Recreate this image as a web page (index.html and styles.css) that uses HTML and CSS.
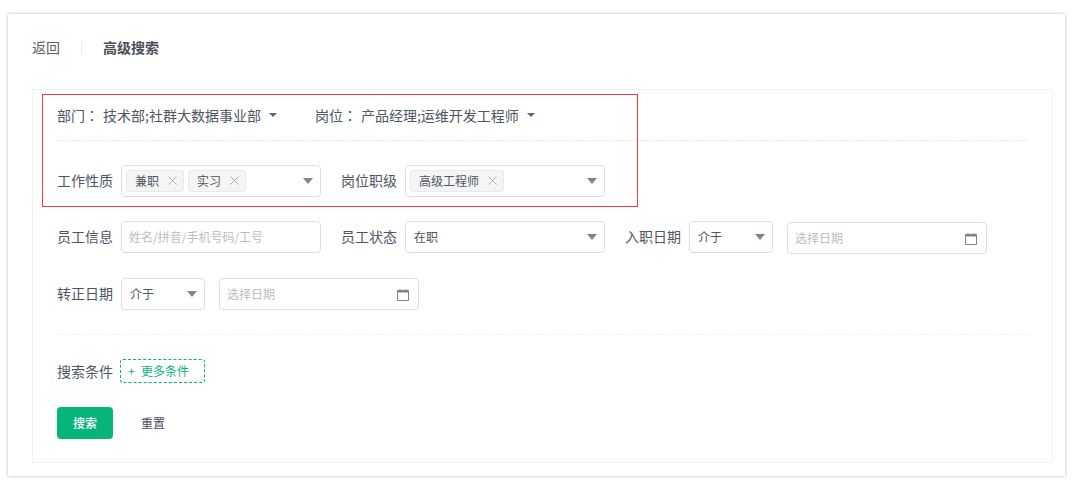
FILE: index.html
```html
<!DOCTYPE html>
<html lang="zh">
<head>
<meta charset="utf-8">
<title>高级搜索</title>
<link rel="stylesheet" href="styles.css">
</head>
<body>
<main class="card">
  <header class="head">
    <a class="back">返回</a>
    <span class="sep"></span>
    <h1 class="title">高级搜索</h1>
  </header>
  <section class="panel">
    <div class="highlight"></div>
    <div class="filters">
      <div class="filter"><span class="filter-label" lang="zh-TW">部门：</span><span class="filter-value">技术部;社群大数据事业部</span><i class="caret small"></i></div>
      <div class="filter"><span class="filter-label" lang="zh-TW">岗位：</span><span class="filter-value">产品经理;运维开发工程师</span><i class="caret small"></i></div>
    </div>
    <div class="rows">
      <div class="row">
        <div class="field">
          <label class="label">工作性质</label>
          <div class="control wide">
            <span class="tag">兼职<svg class="x" viewBox="0 0 9 9"><path d="M.5.5l8 8M8.500.5l-8 8"/></svg></span>
            <span class="tag">实习<svg class="x" viewBox="0 0 9 9"><path d="M.5.5l8 8M8.500.5l-8 8"/></svg></span>
            <i class="caret"></i>
          </div>
        </div>
        <div class="field">
          <label class="label">岗位职级</label>
          <div class="control wide">
            <span class="tag">高级工程师<svg class="x" viewBox="0 0 9 9"><path d="M.5.5l8 8M8.500.5l-8 8"/></svg></span>
            <i class="caret"></i>
          </div>
        </div>
      </div>
      <div class="row">
        <div class="field">
          <label class="label">员工信息</label>
          <div class="control wide text input"><span class="placeholder">姓名/拼音/手机号码/工号</span></div>
        </div>
        <div class="field">
          <label class="label">员工状态</label>
          <div class="control wide text"><span>在职</span><i class="caret"></i></div>
        </div>
        <div class="field">
          <label class="label">入职日期</label>
          <div class="control narrow text"><span>介于</span><i class="caret"></i></div>
          <div class="control wide text date nudge">
            <span class="placeholder">选择日期</span>
            <svg class="cal" viewBox="0 0 12 12"><path d="M.5 1.500h11v10H.5z"/><path d="M.5 2.500h11" stroke-width="2"/><path d="M3 0v1M9 0v1"/></svg>
          </div>
        </div>
      </div>
      <div class="row">
        <div class="field">
          <label class="label">转正日期</label>
          <div class="control narrow text"><span>介于</span><i class="caret"></i></div>
          <div class="control wide text date">
            <span class="placeholder">选择日期</span>
            <svg class="cal" viewBox="0 0 12 12"><path d="M.5 1.500h11v10H.5z"/><path d="M.5 2.500h11" stroke-width="2"/><path d="M3 0v1M9 0v1"/></svg>
          </div>
        </div>
      </div>
    </div>
    <div class="conditions">
      <label class="label">搜索条件</label>
      <button class="more"><span class="plus">+</span>更多条件</button>
    </div>
    <div class="actions">
      <button class="primary">搜索</button>
      <button class="reset">重置</button>
    </div>
  </section>
</main>
</body>
</html>
```
FILE: styles.css
```css
* { box-sizing: border-box; }
html, body { margin: 0; padding: 0; background: #fff; }
body {
  height: 491px;
  overflow: hidden;
  padding: 14px 14px 0 8px;
  font-family: "Noto Sans CJK SC", "Noto Sans", sans-serif;
  font-size: 14px;
  color: #4e5563;
}
.card {
  height: 462px;
  padding: 0 12px 13px 24px;
  background: #fff;
  box-shadow: 0 0 3px rgba(0, 0, 0, .3);
}
.head {
  display: flex;
  align-items: center;
  height: 75px;
  padding-bottom: 9px;
}
.back { width: 49px; line-height: 20px; color: #5a6068; }
.sep { width: 1px; height: 13px; background: #e3e8e6; }
.title { margin: 0 0 0 21px; font-size: 14px; font-weight: 700; line-height: 20px; color: #4a4f58; }
.panel {
  position: relative;
  height: 374px;
  padding: 0 24px;
  border: 1px solid #f0f2f5;
}
.highlight {
  position: absolute;
  left: 9px;
  top: 4px;
  width: 596px;
  height: 113px;
  border: 1px solid #f53c3c;
  pointer-events: none;
}
.filters {
  display: flex;
  gap: 38px;
  height: 51px;
  padding-top: 15px;
  margin-bottom: 24px;
  border-bottom: 1px dashed #e6e8ea;
}
.filter { display: flex; align-items: center; height: 20px; }
.filter-label { width: 46px; white-space: nowrap; font-family: "Noto Sans CJK TC", sans-serif; }
.filter-value { white-space: nowrap; }
.rows { display: flex; flex-direction: column; gap: 24px; }
.row { display: flex; gap: 20px; }
.field { display: flex; align-items: flex-start; gap: 8px; }
.label { line-height: 30px; white-space: nowrap; }
.control {
  position: relative;
  display: flex;
  align-items: center;
  gap: 4px;
  height: 32px;
  padding: 0 4px;
  border: 1px solid #dcdee2;
  border-radius: 4px;
  background: #fff;
  font-size: 12px;
}
.wide { width: 200px; }
.narrow { width: 84px; }
.text { padding: 0 8px 2px; }
.input { padding-left: 7px; }
.date { margin-left: 6px; padding-left: 7px; }
.nudge { margin-top: 1px; }
.placeholder { color: #b9bdc4; }
.tag {
  display: flex;
  align-items: center;
  height: 22px;
  padding: 0 6px 1px 8px;
  border: 1px solid #e8eaec;
  border-radius: 3px;
  background: #f5f5f6;
  gap: 9px;
}
.x { width: 9px; height: 9px; fill: none; stroke: #a8abb0; stroke-width: 1; }
.caret {
  width: 0;
  height: 0;
  border-style: solid;
  border-width: 6px 5.500px 0;
  border-color: #80848f transparent transparent;
}
.control .caret { position: absolute; right: 7px; top: 12px; }
.caret.small { margin-left: 8px; border-width: 4px 4.500px 0; border-top-color: #5f6570; }
.cal {
  position: absolute;
  right: 9px;
  top: 10px;
  width: 12px;
  height: 12px;
  fill: none;
  stroke: #80848f;
  stroke-width: 1;
}
.conditions {
  display: flex;
  align-items: flex-start;
  gap: 7px;
  margin-top: 24px;
  padding-top: 24px;
  border-top: 1px dashed #eef0f2;
  height: 49px;
}
.conditions .label { line-height: 24px; }
.more {
  display: flex;
  align-items: center;
  width: 85px;
  height: 24px;
  padding: 0 0 2px 7px;
  border: 1px dashed #07b57b;
  border-radius: 3px;
  background: #fff;
  color: #07b57b;
  font: inherit;
  font-size: 12px;
}
.plus { width: 13px; text-align: left; }
.actions { display: flex; gap: 12px; margin-top: 24px; }
.primary, .reset {
  height: 32px;
  width: 56px;
  border: 0;
  padding: 0 0 2px;
  font: inherit;
  font-size: 12px;
}
.primary { border-radius: 4px; background: #07b57b; color: #fff; font-weight: 500; }
.reset { background: transparent; color: #4a4f58; }
```
